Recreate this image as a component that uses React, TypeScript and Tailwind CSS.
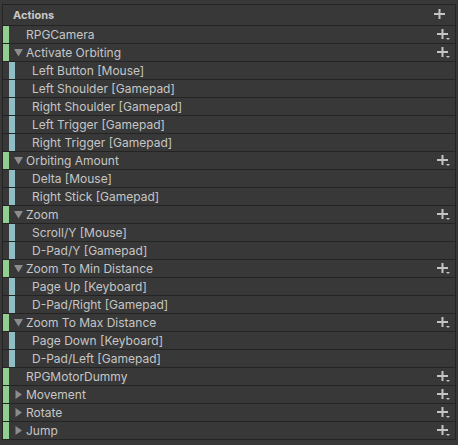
import React from 'react';

type RowKind = 'map' | 'action' | 'binding';

interface Row {
  kind: RowKind;
  label: string;
  expanded?: boolean;
}

const rows: Row[] = [
  { kind: 'map', label: 'RPGCamera' },
  { kind: 'action', label: 'Activate Orbiting', expanded: true },
  { kind: 'binding', label: 'Left Button [Mouse]' },
  { kind: 'binding', label: 'Left Shoulder [Gamepad]' },
  { kind: 'binding', label: 'Right Shoulder [Gamepad]' },
  { kind: 'binding', label: 'Left Trigger [Gamepad]' },
  { kind: 'binding', label: 'Right Trigger [Gamepad]' },
  { kind: 'action', label: 'Orbiting Amount', expanded: true },
  { kind: 'binding', label: 'Delta [Mouse]' },
  { kind: 'binding', label: 'Right Stick [Gamepad]' },
  { kind: 'action', label: 'Zoom', expanded: true },
  { kind: 'binding', label: 'Scroll/Y [Mouse]' },
  { kind: 'binding', label: 'D-Pad/Y [Gamepad]' },
  { kind: 'action', label: 'Zoom To Min Distance', expanded: true },
  { kind: 'binding', label: 'Page Up [Keyboard]' },
  { kind: 'binding', label: 'D-Pad/Right [Gamepad]' },
  { kind: 'action', label: 'Zoom To Max Distance', expanded: true },
  { kind: 'binding', label: 'Page Down [Keyboard]' },
  { kind: 'binding', label: 'D-Pad/Left [Gamepad]' },
  { kind: 'map', label: 'RPGMotorDummy' },
  { kind: 'action', label: 'Movement', expanded: false },
  { kind: 'action', label: 'Rotate', expanded: false },
  { kind: 'action', label: 'Jump', expanded: false },
];

const PlusIcon = ({ caret }: { caret?: boolean }) => (
  <svg width="14" height="12" viewBox="0 0 14 12" className="block">
    <rect x="0" y="4" width="11" height="2" fill="#c4c4c4" />
    <rect x="4.5" y="0" width="2" height="10" fill="#c4c4c4" />
    {caret && <path d="M9 9 L13 9 L11 11 Z" fill="#c4c4c4" />}
  </svg>
);

const Triangle = ({ expanded }: { expanded?: boolean }) =>
  expanded ? (
    <svg width="9" height="9" viewBox="0 0 9 9" className="block">
      <path d="M0 1 L9 1 L4.5 8.5 Z" fill="#8c8c8c" />
    </svg>
  ) : (
    <svg width="9" height="9" viewBox="0 0 9 9" className="block">
      <path d="M1.5 0 L8 4.5 L1.5 9 Z" fill="#8c8c8c" />
    </svg>
  );

const ActionRow = ({ row }: { row: Row }) => {
  const isBinding = row.kind === 'binding';
  return (
    <div className="flex h-[18px] items-stretch border-b border-[#242424]">
      {isBinding ? (
        <div className="ml-[6px] w-[6px] shrink-0 bg-[#8fbec4]" />
      ) : (
        <div className="w-[6px] shrink-0 bg-[#91cf91]" />
      )}
      {row.kind === 'action' ? (
        <div className="ml-[5px] flex w-[12px] shrink-0 items-center">
          <Triangle expanded={row.expanded} />
        </div>
      ) : (
        <div className="w-[17px] shrink-0" />
      )}
      <div className="flex flex-1 items-center text-[12px] leading-none text-[#c6c6c6]">
        {row.label}
      </div>
      {!isBinding && (
        <div className="mr-[4px] flex items-center">
          <PlusIcon caret />
        </div>
      )}
    </div>
  );
};

export default function App() {
  return (
    <div
      className="h-[445px] w-[458px] overflow-hidden bg-[#383838] px-[2px] pt-[4px]"
      style={{ fontFamily: 'Inter, "Noto Sans", sans-serif' }}
    >
      <div className="border-x border-t border-[#242424]">
        <div className="flex h-[21px] items-center justify-between border-b border-[#242424] pl-[10px] pr-[7px]">
          <span className="text-[11px] font-bold text-[#c8c8c8]">Actions</span>
          <PlusIcon />
        </div>
        {rows.map((row, i) => (
          <ActionRow key={i} row={row} />
        ))}
      </div>
    </div>
  );
}
